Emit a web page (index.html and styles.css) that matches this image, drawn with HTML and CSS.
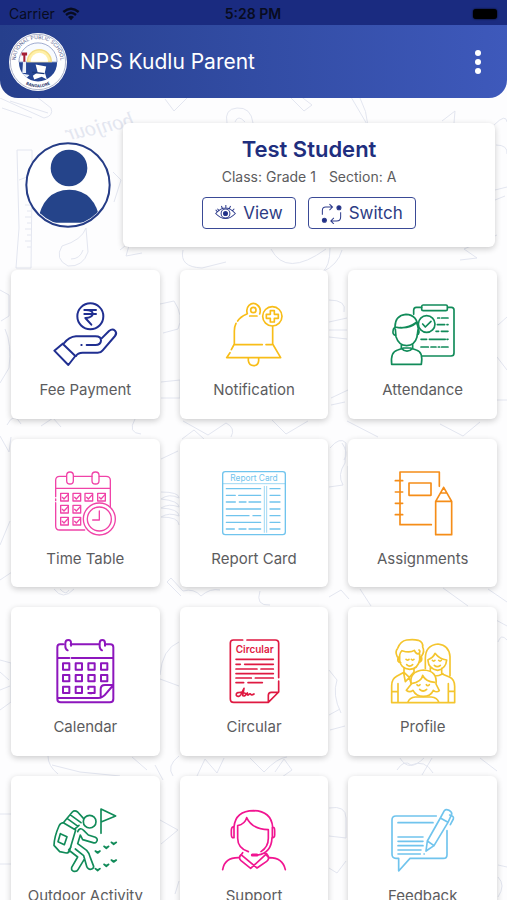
FILE: index.html
```html
<!DOCTYPE html>
<html lang="en">
<head>
<meta charset="utf-8">
<meta name="viewport" content="width=device-width, initial-scale=1">
<title>NPS Kudlu Parent</title>
<link rel="stylesheet" href="styles.css">
</head>
<body>
<div class="app">
  <div class="status-bar">
    <div class="carrier"><span>Carrier</span>
      <svg class="wifi" viewBox="0 0 54 42" aria-hidden="true"><path d="M4 15Q27-5 50 15M12 24Q27 11 42 24" fill="none" stroke="currentColor" stroke-width="7"/><path d="M18 30q9-7 18 0l-9 10z" fill="currentColor"/></svg>
    </div>
    <time>5:28 PM</time>
    <div class="battery-wrap"><span class="battery"></span></div>
  </div>

  <header class="app-bar">
    <svg class="logo" viewBox="28 101 170 170" aria-hidden="true">
      <defs>
        <path id="arc-top" d="M48 196A66 66 0 1 1 178 196"/>
        <path id="arc-bottom" d="M62 240A74 74 0 0 0 164 240"/>
      </defs>
      <circle cx="113" cy="186" r="85" fill="#fff"/>
      <circle cx="113" cy="186" r="81" fill="none" stroke="#8b93b5" stroke-width="2"/>
      <path d="M57 186a56 56 0 0 1 112 0z" fill="#f8fbff" stroke="#7484b8" stroke-width="2"/>
      <path d="M57 187a56 56 0 0 0 112 0z" fill="#254594"/>
      <path d="M82 185a35 35 0 0 1 70 0z" fill="#fff0a8" stroke="#f3dc85" stroke-width="4"/>
      <path d="M91 185a26 26 0 0 1 52 0z" fill="#fff"/>
      <path d="M69 186h9v32H67zM66 220l22 4-8 8" fill="#e9eff8"/>
      <path d="M65 158h16v9h-5v18h-6v-18h-5z" fill="#a51f35"/>
      <path d="M106 193l31 6-4 18 6 20-15-8-22 8-4-11 14-10z" fill="#fff"/>
      <path d="M96 216l36 4" stroke="#1b397c" stroke-width="4"/>
      <text class="logo-text"><textPath href="#arc-top" startOffset="50%">NATIONAL PUBLIC SCHOOL</textPath></text>
      <text class="logo-text logo-city"><textPath href="#arc-bottom" startOffset="50%">BANGALORE</textPath></text>
    </svg>
    <h1>NPS Kudlu Parent</h1>
    <button class="menu" type="button" aria-label="Menu"><i></i><i></i><i></i></button>
  </header>

  <main>
    <svg class="doodles" viewBox="0 98 507 802" preserveAspectRatio="xMidYMin slice" aria-hidden="true">
      <text class="scrawl" transform="translate(135 126) rotate(-12) scale(-1 1)">bonjour</text>
      <path d="M0 98l44 20q10-2 7-10l-14-11M10 101l38 12M2 108l30 10M17 150h15v38l-1 80H16l3-40zM19 180l8-3M25 205h6m-4 6h4m-6 6h6m-4 6h4m-6 6h6m-4 6h4m-6 6h6m-4 6h4M86 228q-4 12-24 18-8 13 6 20 15 1 20-14zM71 259q9 0 12-9"/>
      <path d="M165 99l9 12 14-14M227 123q-3-14 10-15 14-1 16 15m-18-1q3-8 10 0M291 98l13 13 8-6-13-10M351 97l17 29q-1-15-8-28M442 121l13-10-1 12M494 125q12-12 13-3M496 145q12 0 11 9M495 190l12-3m-12 13l10-4M460 260l17-2-13-9 33-14M271 249q15 29 55 0m4-1q0 19-8 24 16-7 20-22M183 250q-4 17 19 18l24-6M120 250l10-8-4 14 16-3M113 172l8 8-7 22"/>
      <path d="M0 290l9 5v21l-8 5m4 8q7 15 4 39l-9 15M160 304l14-3q10 15 4 28l-15 4M161 382l19-2v18h-19M329 300q18 0 15 12m-15 10l18-4m-18 12h18m-18 7l18 2M331 398l17-8m-17 15l14-3M498 325l9-8m-10 40l10 13m-10 30h10M7 425q7-14 14-1m20 2l12-8 8 9m74-8q-8 14 6 15m41 5l12-9 10 9M183 421l25 14 18-12q10 5 5 14m41-17l14 14 22-13M347 421l31 16M440 424l23 12 17-14M0 436l9 16 2-15"/>
      <path d="M161 492q18 0 18 6-10-5-18 1 18 2 18 8-10-4-18 1 18 1 18 8-10-4-18 1 18 0 18 8m-18-66l17-8M330 448q10-12 16-5l-1 20q-8 12-2 22l-14 2m13-44q7 10 2 17m4 6v34M0 545l10-24M0 580l12-8M54 589q9 12 20 0m-14 0q6 7 9 1M171 578l12 13q11-3 18 5 9-8 19-6m-49-12l-4 4 14 14M260 591q-5 15 10 14M329 597l12-7 8 9M360 589l11 17m72-18l25 18m20-17l19 13"/>
      <path d="M0 660l11 3v39L0 710m0-38l9 8m-9 10l10-4M160 675q2-26 19-33m-19 37l19 7M329 670l8 10q-5 15 4 33m-12 2l11-6M496 620l11 6m-9 16q3-9 9-2M48 756q0 10 10 18m74-17l15 13m32-14q-13 10-6 20M250 758l14 14q13-14 23-15M330 730l15-4M400 758q9 15 24 0m8 0l-10 17m58-17l17 13"/>
      <path d="M52 765l28 7 40 4M155 765l8 15M197 776l8-17 12 14 7-15M275 772l9-13 8 11-10 7M397 770q7-11 14-5 14-6 22 8M0 814h11M0 864h11M160 820l18 10-17 14m18 37l-4 13M329 808q17-3 17 10v20l-17-2m17 25l-9 12-8-5M498 865l9 2m-9 10q8 8 0 20"/>
    </svg>

    <section class="student">
      <svg class="avatar" viewBox="75 142 258 258" role="img" aria-label="Student photo">
        <defs><clipPath id="face"><circle cx="205" cy="271" r="120"/></clipPath></defs>
        <circle cx="204" cy="271" r="125" fill="#fff"/>
        <g fill="#25448a" clip-path="url(#face)"><circle cx="207" cy="220" r="55"/><path d="M112 384q16-98 96-99 78 1 94 99z"/></g>
        <circle cx="204" cy="271" r="125" fill="none" stroke="#253c86" stroke-width="6"/>
      </svg>
      <div class="student-card">
        <h2>Test Student</h2>
        <p class="meta"><span>Class: Grade 1</span><span>Section: A</span></p>
        <div class="actions">
          <button type="button" class="action">
            <svg viewBox="648 328 62 62" aria-hidden="true"><path d="M650 359q29-32 58 0-29 30-58 0zM655 345l6 6M667 337l3 8M680 334v8M694 337l-4 8M705 345l-6 6M650 348l5 6" /><circle cx="679" cy="359" r="13"/><circle class="solid" cx="679" cy="359" r="6"/></svg>
            View</button>
          <button type="button" class="action">
            <svg viewBox="215 323 62 62" aria-hidden="true"><path d="M219 358v-13q0-10 10-10h20m-9-9l9 9-9 9M273 350v14q0 12-12 12h-17m9-9l-9 9 9 9"/><circle class="solid" cx="268" cy="337" r="6"/><circle class="solid" cx="225" cy="374" r="6"/></svg>
            Switch</button>
        </div>
      </div>
    </section>

    <nav class="tiles" aria-label="Modules">
      <a class="tile" href="#fees">
        <svg class="navy bold" viewBox="160 109 192 192" aria-hidden="true"><circle cx="272" cy="152" r="39"/><path d="M254 133h35M254 145h35M259 133q20 0 20 11t-22 13l18 20M164 255l25-21 38 37-21 27zM191 235q17-22 38-23h58q18 0 17 13t-17 13h-26M245 238h1M303 221l25-25q10-8 18-1 7 8 0 16l-37 43q-5 7-15 7h-45q-15 0-20 10"/></svg>
        <span>Fee Payment</span></a>
      <a class="tile" href="#notifications">
        <svg class="yellow" viewBox="157 109 192 192" aria-hidden="true"><path d="M233 144q-5-15 5-25 12-11 25-1 13 10 7 27M240 151h22M230 146q-18 8-26 20M199 173q-5 10-5 23v39l-9 17M181 261l-10 15h162l-24-41v-53M194 237h84M289 237h17M236 278v7q2 15 16 15t15-15v-7"/><circle cx="251" cy="133" r="8"/><circle cx="308" cy="152" r="29"/><path d="M302 135h12v11h12v12h-12v11h-12v-11h-12v-12h12z"/></svg>
        <span>Notification</span></a>
      <a class="tile" href="#attendance">
        <svg class="green" viewBox="158 109 192 192" aria-hidden="true"><path d="M251 125h-17q-8 0-8 9v12M327 125h12q8 0 8 8v129q0 9-9 9h-88M254 118h69q4 0 4 4v8q0 5-5 5h-67q-5 0-5-5v-7q0-5 4-5zM298 157h6m6 0h19M297 177h22m7 0h3M293 197h8m8 0h20M248 221h17m8 0h48m5 0h3M248 244h22m8 0h15m7 0h4m6 0h19M160 296q-4-38 18-43l18-6h20l18 6q21 5 15 43zM189 237v11q17 17 34 0v-11M171 190l2 23q8 26 32 27 24-1 31-26l3-22M171 209q-10-2-6-18l5-7q0-35 33-38 34 1 36 40 7 19-3 22M171 184q32 9 65-15M186 186q30 2 49-15l5 16"/><circle cx="265" cy="175" r="25" fill="#fff"/><path d="M253 175l8 9 17-17"/></svg>
        <span>Attendance</span></a>
      <a class="tile" href="#timetable">
        <svg class="pink thin" viewBox="160 121 192 192" aria-hidden="true"><path d="M200 137h-20q-12 0-12 12v49M168 205v5M168 216v70q0 12 12 12h75M223 137h54M299 137h20q13 0 13 12v84M168 173h164"/><rect x="201" y="124" width="20" height="36" rx="10"/><rect x="277" y="124" width="21" height="36" rx="10"/><path d="M183 188h23v23h-23zm37 0h23v23h-23zm36 0h23v23h-23zm38 0h23v23h-23zM183 224h23v23h-23zm37 0h23v23h-23zM183 260h23v23h-23zm37 0h23v23h-23z"/><path d="M188 200l5 5 12-13m20 8l5 5 12-13m19 8l5 5 12-13m21 8l5 5 12-13M188 236l5 5 12-13m20 8l5 5 12-13M188 272l5 5 12-13m20 8l5 5 12-13"/><circle cx="299" cy="265" r="48" fill="#fff"/><circle cx="299" cy="265" r="36"/><path d="M299 241v27h-20"/></svg>
        <span>Time Table</span></a>
      <a class="tile" href="#report">
        <svg class="sky thin" viewBox="66 122 192 192" aria-hidden="true"><rect x="68" y="124" width="188" height="189" rx="8"/><path d="M68 160h188M193 168v138M200 168v138" stroke-width="2"/><path d="M79 175h103M79 195h27m10 0h66M79 215h27m12 0h20m9 0h35M79 236h103M79 256h68m12 0h23M79 276h103M79 296h24m14 0h21m9 0h35M210 175h30M210 195h30M210 215h30M210 236h30M210 256h30M210 276h30M210 296h30"/><text class="icon-text" x="162" y="151">Report Card</text></svg>
        <span>Report Card</span></a>
      <a class="tile" href="#assignments">
        <svg class="orange" viewBox="572 120 192 192" aria-hidden="true"><path d="M717 166v-43H599v158h94M585 149h22M585 183h22M585 217h22M585 251h22M626 156h66v37h-66zM730 169l-24 42v100h48V211zM706 211h48M721 186h17"/></svg>
        <span>Assignments</span></a>
      <a class="tile" href="#calendar">
        <svg class="purple bold" viewBox="160 116 192 192" aria-hidden="true"><path d="M191 132h-10q-8 0-8 9v155q0 10 10 10h148q10 0 10-10V141q0-9-9-9h-14M213 132h85M173 173h36m7 0h125M204 150q-7-3-7-12v-9q0-10 9-10t8 10v7M307 150q-7-3-7-12v-9q0-10 8-10t8 10v7M174 293h121q14 0 24-13l22-26h-25q-13 0-13 13v25M276 279h-6"/><path d="M190 189h19v19h-19zm38 0h19v19h-19zm38 0h19v19h-19zm38 0h19v19h-19zM190 224h19v19h-19zm38 0h19v19h-19zm38 0h19v19h-19zm38 0h19v19h-19zM190 259h19v19h-19zm38 0h19v19h-19zM266 266v-7h19v19h-19"/></svg>
        <span>Calendar</span></a>
      <a class="tile" href="#circular">
        <svg class="red" viewBox="67 116 192 192" aria-hidden="true"><path d="M129 119h-28q-9 0-9 9v168q0 10 10 10h104l31-31v-33M237 232V129q0-10-10-10h-85M206 305v-20q0-9 9-9h21M109 177h112M109 192h13m13 0h86M109 206h63m12 0h37M109 220h112M109 233h46m12 0h54M109 247h23m13 0h43"/><path d="M133 264l-9 18q-7 11-14 3-2-9 10-9 13-1 18 4m-5-16l-4 22q6 4 14-8 0 9 4 5 5-5 6-1 3 4 10-1"/><text class="icon-text circular-text" x="165" y="158">Circular</text></svg>
        <span>Circular</span></a>
      <a class="tile" href="#profile">
        <svg class="gold" viewBox="573 116 192 192" aria-hidden="true"><path d="M599 179q-3-9-7-9-8-17 1-26 8-22 27-25 21-3 35 1 15 6 13 20 7 14-3 27l-6 12M599 164q1-7 7-13 24 8 37-1 6 13 13 10 7-7 1-11M599 164v16q3 25 30 27 25-1 30-28v-18M595 170q-6 15 7 17M664 168q4 15-6 18M618 177q4 5 9 0M634 177q4 5 8 0M620 193q9 9 18 0M612 203v13l16 15 14-16v-11M611 218l5 26 12-12 5 16M612 216l-22 12q-15 8-15 28v51h189v-49q0-21-16-28l-23-10M575 274h19v32M594 250v24M745 250v56M745 273h19M750 226v-57q-2-34-36-38-38 4-38 43v31M684 181q1 23 29 29 25-5 27-31-21-2-35-20-5 13-21 19zM691 202v17M725 204v15M697 180q4 5 8 0M716 180q4 5 8 0M703 195q9 8 18 0M684 220q20 14 45 0"/><path fill="#fff" d="M634 251q-8-37 36-42 43 2 38 42l10 20q-8 7-18-1-8 18-30 18t-31-18q-10 8-20 0z"/><path d="M634 250q31-6 34-25 8 18 36 21M651 253q4 6 9 0M679 253q4 6 9 0M659 267q10 10 21 0M624 305q4-13 22-15h48q18 2 22 15"/></svg>
        <span>Profile</span></a>
      <a class="tile" href="#outdoor">
        <svg class="green" viewBox="160 127 192 192" aria-hidden="true"><circle cx="270" cy="168" r="19"/><path d="M304 203v-73l44 21-42 17M191 171l27-32q7-7 16 0l18 20M191 171l33 20 14-12M202 158l33 24M211 147l33 24M191 171q-9 1-13 10-14 31-15 58l17 19 20 4q7 0 10-8l18-61M182 204l20 9-8 24-19-9zM234 198q6-15 18-4l14 14 21 7q10 6 3 14-3 4-10 2l-31-9-7-14-8 26 27 20q8 8 11 22l10 26q0 9-10 9-7 0-11-9l-9-32-25-20M214 244l-7 9 27 21-18 31q-2 11 7 12 9 1 12-5l20-33"/><path d="M287 256l7 4 7-4-7 6zm26-14l7 4 7-4-7 6zm22-12l7 4 8-4-8 6zM287 309l7 4 7-4-7 6zm26-13l7 4 7-4-7 6zm22-13l7 4 8-4-8 6z"/></svg>
        <span>Outdoor Activity</span></a>
      <a class="tile" href="#support">
        <svg class="magenta" viewBox="667 127 192 192" aria-hidden="true"><path d="M669 312q6-37 49-36l11-15M857 312q-8-37-50-36l-10-12M724 267q-9 9 0 18l29 23 48-44M724 267l48 40 29-20q11-9 2-20M703 216q-8 2-8-10v-13q1-11 8-9zM703 184q4-48 59-49 52 1 57 49M819 185q6-2 6 10v12q0 10-7 9v-31M714 180v38q0 30 32 40M714 180q22-4 27-24 16 35 65 36v26q0 26-22 40M817 216q-2 46-43 52h-16"/><path d="M758 268h14" stroke-width="9"/></svg>
        <span>Support</span></a>
      <a class="tile" href="#feedback">
        <svg class="sky" viewBox="1172 127 192 192" aria-hidden="true"><path d="M1308 151h-121q-12 0-12 12v103q0 12 12 12h8v38l34-38h100q11 0 11-11v-72M1193 171h105M1193 214h75M1193 227h75M1193 240h75M1193 253h69M1193 265h67M1271 265h1M1277 256l4-30 39-69 23 13-42 70zM1281 226l20 14M1320 157l12-22q5-6 14-1 10 6 8 12l-11 24M1348 148q14 3 11 12l-9 17"/></svg>
        <span>Feedback</span></a>
    </nav>
  </main>
</div>
</body>
</html>
```

FILE: styles.css
```css
* {
  box-sizing: border-box;
}

body {
  margin: 0;
  background: #fdfdfe;
  color: #5c5c5e;
  font-family: Inter, "Liberation Sans", sans-serif;
}

.status-bar {
  display: grid;
  grid-template-columns: 1fr auto 1fr;
  align-items: center;
  height: 25px;
  padding: 2px 10px 0 9px;
  background: #1a2b80;
  color: #080c20;
  font-size: 14px;
}

.carrier {
  display: flex;
  align-items: center;
  gap: 7px;
}

.wifi {
  width: 18px;
  height: 14px;
}

.status-bar time {
  font-weight: 600;
}

.battery-wrap {
  display: flex;
  justify-content: flex-end;
}

.battery {
  width: 24px;
  height: 10px;
  border-radius: 3px;
  background: #000;
  box-shadow: 0 0 2px #000;
}

.app-bar {
  display: flex;
  align-items: center;
  height: 73px;
  padding: 0 20px 0 9px;
  border-radius: 0 0 18px 18px;
  background: linear-gradient(90deg, #263f8c, #3e59bb);
  color: #fff;
}

.logo {
  width: 58px;
  height: 58px;
}

.logo-text {
  font-size: 15px;
  fill: #56618f;
  text-anchor: middle;
}

.logo-city {
  font-size: 12px;
  font-weight: 700;
  fill: #27356d;
}

h1 {
  flex: 1;
  margin: 0 0 0 13px;
  font-size: 21px;
  font-weight: 400;
}

.menu {
  display: flex;
  flex-direction: column;
  gap: 3px;
  padding: 6px;
  border: 0;
  background: none;
}

.menu i {
  width: 6px;
  height: 6px;
  border-radius: 50%;
  background: #fff;
}

main {
  position: relative;
  padding: 25px 10px 20px 11px;
}

.doodles {
  position: absolute;
  inset: 0;
  z-index: -1;
  width: 100%;
  fill: none;
  stroke: #e3e6f0;
  stroke-width: 1;
}

.scrawl {
  font: italic 22px "Liberation Serif", serif;
  fill: #e3e6f0;
  stroke: none;
}

.student {
  display: flex;
  align-items: center;
  gap: 12px;
  margin: 0 2px 23px 14px;
}

.avatar {
  flex: none;
  width: 86px;
  height: 86px;
}

.student-card {
  flex: 1;
  padding: 12px 12px 18px;
  border-radius: 6px;
  background: #fff;
  box-shadow: 0 2px 6px rgba(0, 0, 0, 0.2);
  text-align: center;
}

h2 {
  margin: 0;
  color: #202e7e;
  font-size: 22px;
  font-weight: 600;
  line-height: 28px;
}

.meta {
  display: flex;
  justify-content: center;
  gap: 13px;
  margin: 4px 0 10px;
  font-size: 14px;
  line-height: 20px;
}

.actions {
  display: flex;
  justify-content: center;
  gap: 12px;
}

.action {
  display: flex;
  align-items: center;
  gap: 7px;
  height: 32px;
  padding: 0 12px;
  border: 1px solid #3a4a96;
  border-radius: 4px;
  background: #fff;
  color: #2c3b84;
  font-family: inherit;
  font-size: 17px;
}

.action svg {
  width: 21px;
  height: 21px;
  fill: none;
  stroke: #2e3c8c;
  stroke-width: 3;
}

.action .solid {
  fill: #1f2e88;
}

.tiles {
  display: grid;
  grid-template-columns: repeat(3, 1fr);
  gap: 20px;
}

.tile {
  display: flex;
  flex-direction: column;
  align-items: center;
  gap: 14px;
  aspect-ratio: 1;
  padding-top: 32px;
  border-radius: 6px;
  background: #fff;
  box-shadow: 0 2px 6px rgba(0, 0, 0, 0.2);
  color: inherit;
  font-size: 15px;
  line-height: 20px;
  text-decoration: none;
  white-space: nowrap;
}

.tile svg {
  width: 64px;
  height: 64px;
  overflow: visible;
  fill: none;
  stroke: currentColor;
  stroke-width: 5;
  stroke-linecap: round;
  stroke-linejoin: round;
}

.tile svg.thin {
  stroke-width: 4;
}

.tile svg.bold {
  stroke-width: 6;
}

.tile .icon-text {
  fill: currentColor;
  stroke: none;
  font-size: 25px;
  text-anchor: middle;
}

.tile .circular-text {
  font-size: 30px;
  font-weight: 600;
}

.navy { color: #202f91; }
.yellow { color: #f8bd18; }
.green { color: #118b59; }
.pink { color: #f043a8; }
.sky { color: #70c4ed; }
.orange { color: #f58d18; }
.purple { color: #8d16bd; }
.red { color: #df1941; }
.gold { color: #f4c52e; }
.magenta { color: #f11591; }
```
